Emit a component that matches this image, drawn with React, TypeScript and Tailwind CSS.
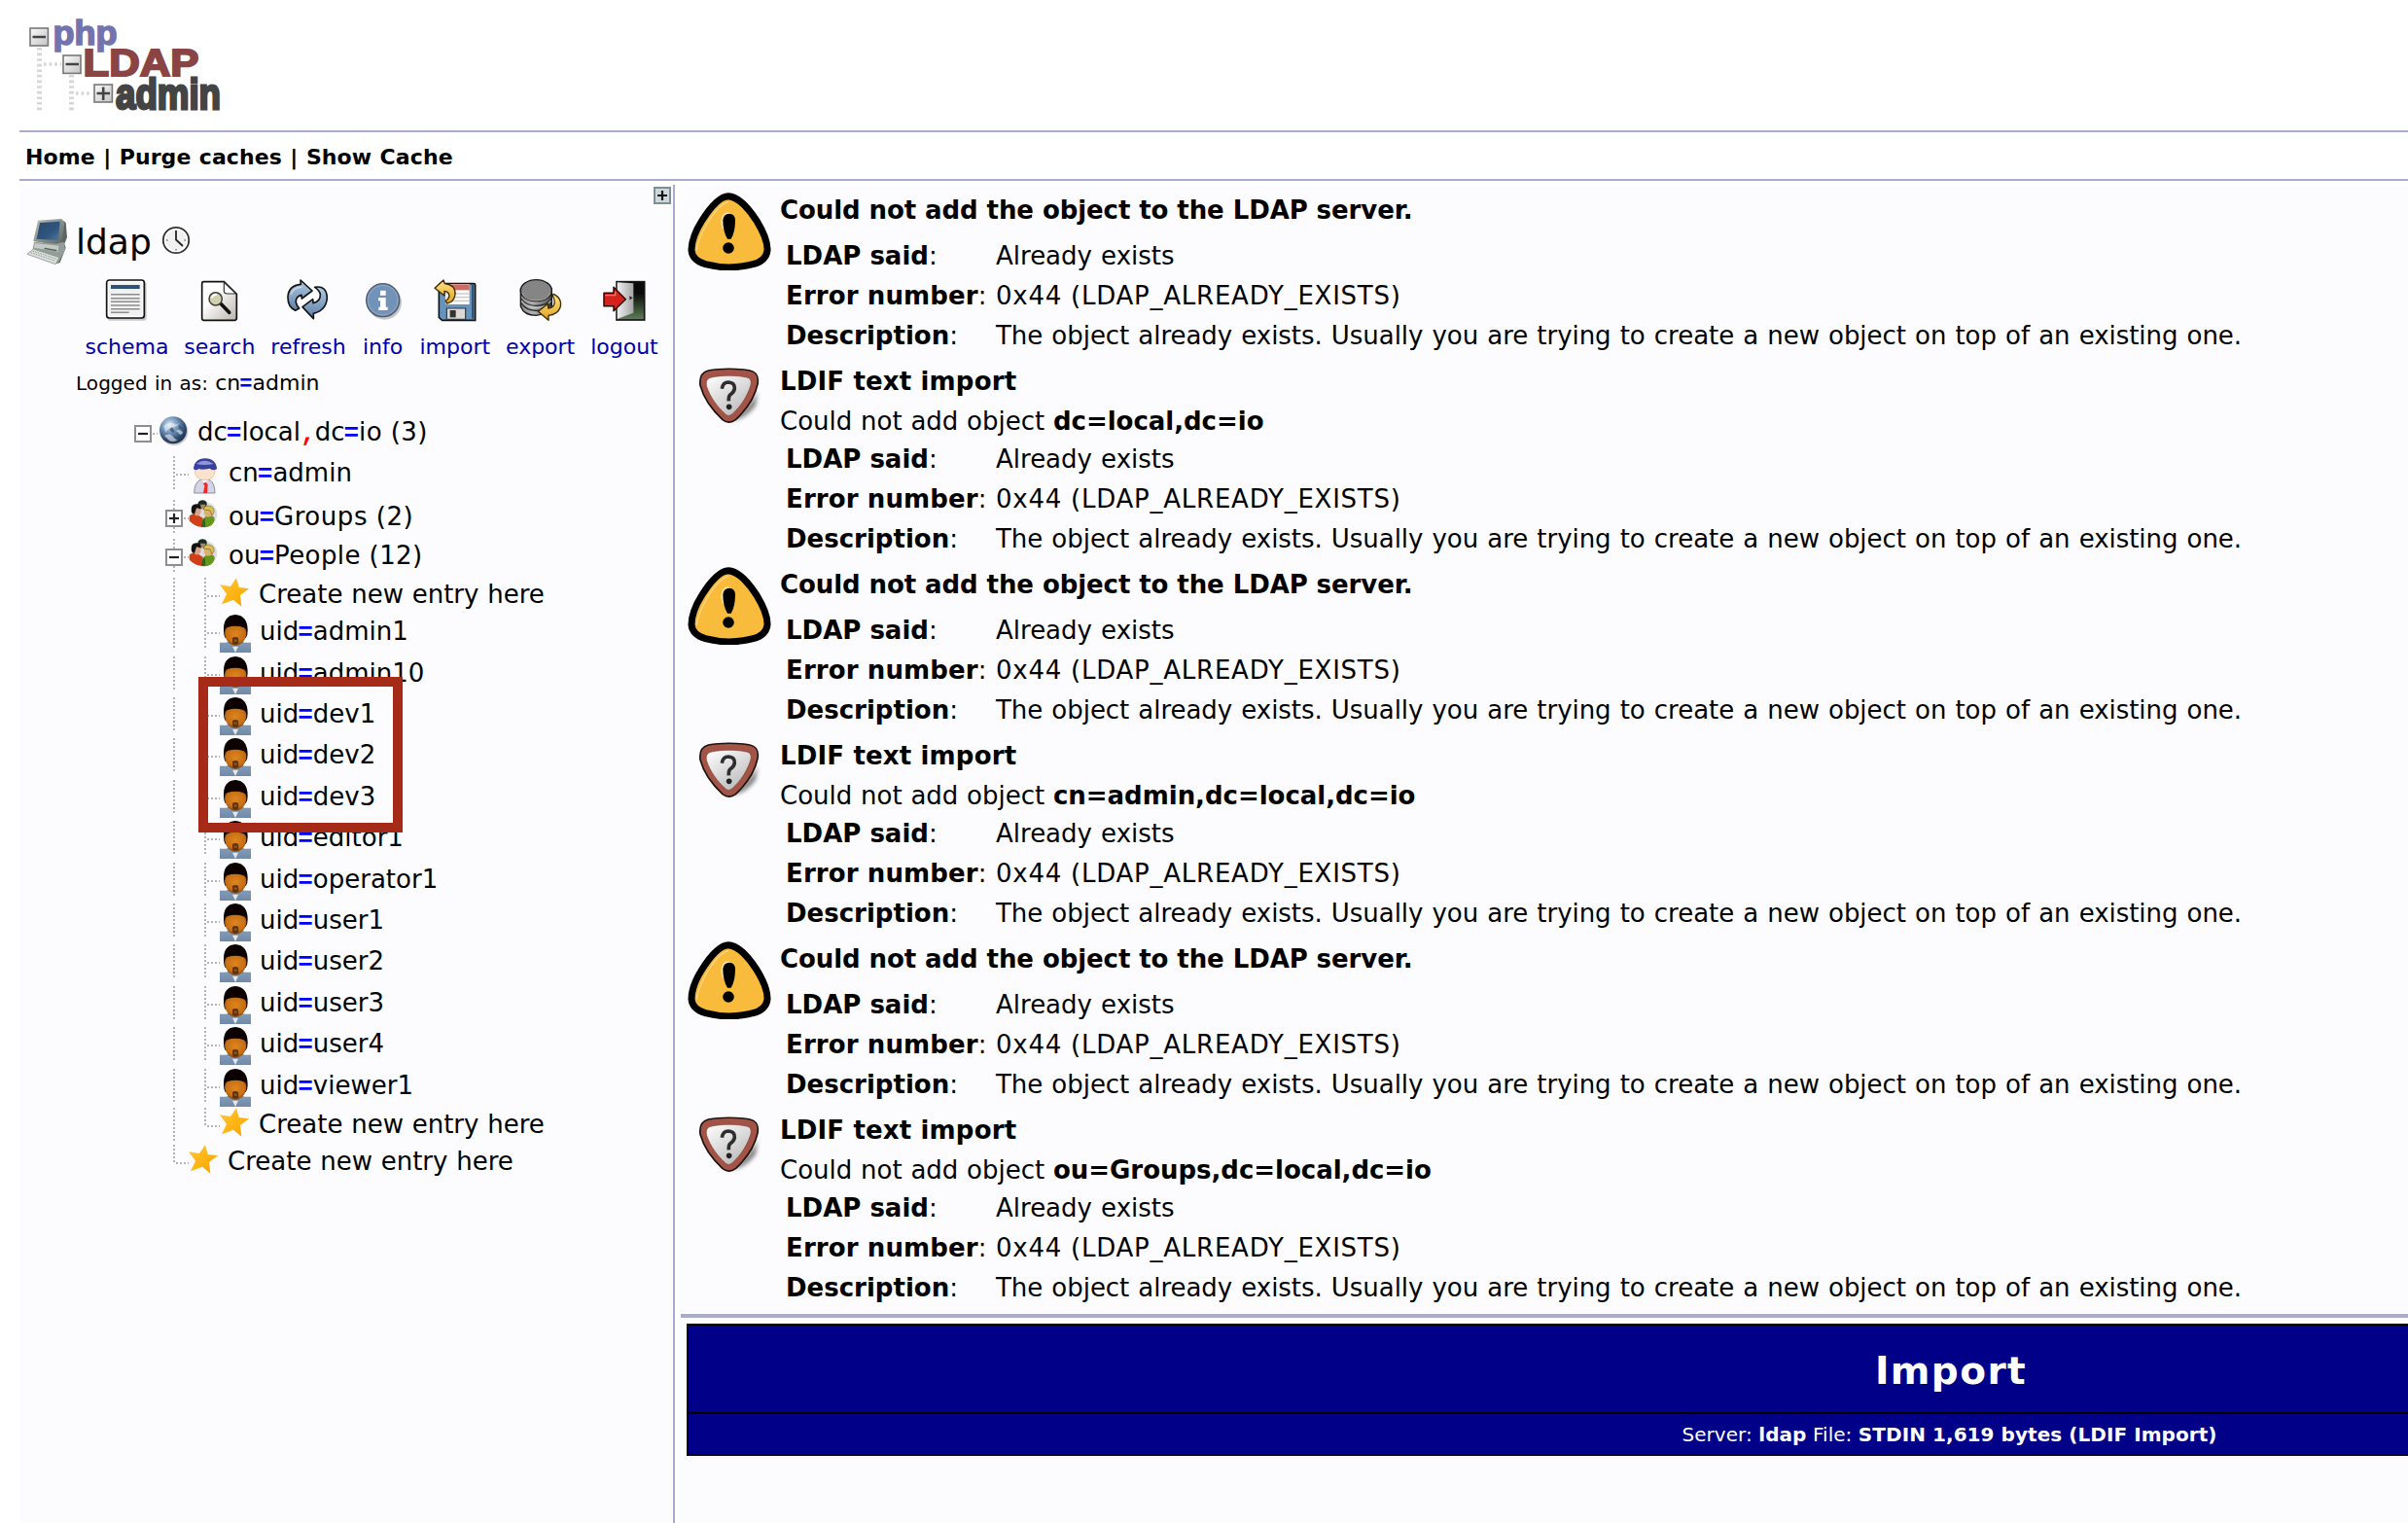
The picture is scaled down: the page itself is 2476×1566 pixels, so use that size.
import type { ReactNode } from "react";

/* ---------- Logo ---------- */

function Logo() {
  return (
    <svg className="block h-[118px] w-[214px]" viewBox="18 2 214 118" role="img" aria-label="phpLDAPadmin">
      <defs>
        <linearGradient id="logoBox" x1="0" y1="0" x2="1" y2="1">
          <stop offset="0" stopColor="#fafafa" />
          <stop offset="1" stopColor="#c4c4c4" />
        </linearGradient>
      </defs>
      <g stroke="#d6d6d6" strokeDasharray="2.6 3" fill="none">
        <path d="M40.5 49V115" strokeWidth="5" />
        <path d="M73.5 77V115" strokeWidth="5" />
        <path d="M45 66H63M78 96H95" strokeWidth="3.5" />
      </g>
      <g fill="url(#logoBox)" stroke="#777" strokeWidth="1.6">
        <rect x="31" y="29" width="18.4" height="18" />
        <rect x="65" y="57" width="18" height="18.4" />
        <rect x="97" y="87" width="18.4" height="18" />
      </g>
      <path d="M33.5 38H47M67.5 66H81M99.5 96H113M106.2 89.5V103" stroke="#444" strokeWidth="2.6" />
      <g fontFamily="Liberation Sans" fontWeight="700">
        <text x="54.5" y="46" fontSize="35" fill="#7274ae" stroke="#7274ae" strokeWidth="1.6" textLength="66" lengthAdjust="spacingAndGlyphs">php</text>
        <text x="85.5" y="77.5" fontSize="39.5" fill="#8a4444" stroke="#8a4444" strokeWidth="2" textLength="119" lengthAdjust="spacingAndGlyphs">LDAP</text>
        <text x="119" y="112" fontSize="44.5" fill="#444" stroke="#444" strokeWidth="2.8" textLength="108" lengthAdjust="spacingAndGlyphs">admin</text>
      </g>
    </svg>
  );
}

/* ---------- Server and toolbar icons ---------- */

function ComputerIcon() {
  return (
    <svg className="block h-[48px] w-[44px]" viewBox="0 0 132 144">
      <defs>
        <linearGradient id="scr" x1="0" y1="0" x2="1" y2="1">
          <stop offset="0" stopColor="#2b4a6c" />
          <stop offset="0.6" stopColor="#2f567f" />
          <stop offset="1" stopColor="#54789c" />
        </linearGradient>
        <linearGradient id="cas" x1="0" y1="0" x2="1" y2="1">
          <stop offset="0" stopColor="#b9c0ba" />
          <stop offset="1" stopColor="#59625d" />
        </linearGradient>
      </defs>
      <path d="M108 5 L122 14 L126 60 L118 80 L122 92 L104 138 L92 142 L92 70Z" fill="#5c6561" />
      <path d="M36 8 L108 3 L118 14 L110 78 L90 84 L22 72Z" fill="url(#cas)" />
      <path d="M42 15 L104 11 L99 70 L32 65Z" fill="url(#scr)" />
      <path d="M24 74 L92 80 L116 74 L120 98 L98 140 L78 132 L20 96Z" fill="#949d97" />
      <path d="M26 78 L100 86 L98 104 L24 92Z" fill="#c4cac5" />
      <path d="M56 94 L94 101" stroke="#4d5551" strokeWidth="4" />
      <path d="M22 96 L102 122 L90 143 L3 112Z" fill="#dde1de" stroke="#8b938e" strokeWidth="2.5" />
      <path d="M20 102 L94 127 M14 107 L90 133" stroke="#929a95" strokeWidth="3" strokeDasharray="5 3" />
    </svg>
  );
}

function ClockIcon() {
  return (
    <svg className="block h-[30px] w-[30px]" viewBox="0 0 30 30">
      <circle cx="15" cy="15" r="13.2" fill="#f0f0f0" stroke="#333" strokeWidth="1.8" />
      <circle cx="15" cy="15" r="11.3" fill="none" stroke="#fff" strokeWidth="1.5" />
      <path d="M15 5V14.5L22 21" fill="none" stroke="#222" strokeWidth="1.8" />
      <path d="M5 15h1.5M23.5 15h1.5M15 24v1.5" stroke="#777" strokeWidth="1.4" />
    </svg>
  );
}

function SchemaIcon() {
  return (
    <svg className="block h-[44px] w-[44px]" viewBox="0 0 132 132">
      <rect x="8" y="8" width="120" height="120" rx="8" fill="#000" opacity="0.2" />
      <rect x="5" y="3" width="116" height="117" rx="8" fill="#fff" stroke="#111" strokeWidth="5" />
      <rect x="12" y="10" width="102" height="103" fill="#f1f1f1" />
      <rect x="18" y="18" width="89" height="12" fill="#2f5078" />
      <path d="M18 47H107M18 59H107M18 70H107M18 81H107M18 92H107M18 103H74" stroke="#8c8c8c" strokeWidth="4.5" />
    </svg>
  );
}

function SearchPageIcon() {
  return (
    <svg className="block h-[44px] w-[42px]" viewBox="0 0 126 132">
      <defs>
        <linearGradient id="pg" x1="0" y1="0" x2="1" y2="1">
          <stop offset="0.35" stopColor="#fff" />
          <stop offset="1" stopColor="#b9b2aa" />
        </linearGradient>
      </defs>
      <path d="M14 8H76L115 46V120Q115 127 108 127H14Q8 127 8 120V14Q8 8 14 8Z" fill="url(#pg)" stroke="#111" strokeWidth="5" />
      <path d="M76 10V36Q76 45 86 45H113Z" fill="#fff" stroke="#333" strokeWidth="3.5" />
      <path d="M66 76 L92 103" stroke="#111" strokeWidth="11" strokeLinecap="round" />
      <circle cx="50" cy="61" r="20" fill="#d0cfae" stroke="#3d3d3d" strokeWidth="4.5" />
      <path d="M38 58Q42 47 54 47" fill="none" stroke="#fff" strokeWidth="6" />
    </svg>
  );
}

function RefreshIcon() {
  return (
    <svg className="block h-[44px] w-[44px]" viewBox="0 0 132 132">
      <defs>
        <linearGradient id="rf" x1="0" y1="0" x2="0" y2="1">
          <stop offset="0" stopColor="#b4cae0" />
          <stop offset="1" stopColor="#5b81aa" />
        </linearGradient>
      </defs>
      <g stroke="#151515" strokeWidth="5" strokeLinejoin="round" fill="url(#rf)">
        <path d="M42 3 L78 36 L46 60 L45 49 Q26 54 28 72 Q30 82 38 90 L26 97 Q2 86 3 54 Q5 20 43 16Z" />
        <path d="M82 122 L48 86 L80 62 L81 74 Q104 68 103 47 Q101 35 86 25 Q122 18 124 57 Q122 96 82 106Z" />
      </g>
      <path d="M12 48Q18 26 46 24" fill="none" stroke="#dce8f3" strokeWidth="4" opacity="0.7" />
    </svg>
  );
}

function InfoIcon() {
  return (
    <svg className="block h-[44px] w-[44px]" viewBox="0 0 132 132">
      <circle cx="70" cy="72" r="53" fill="#000" opacity="0.22" />
      <circle cx="65" cy="65" r="51" fill="#7392b8" stroke="#4e5a68" strokeWidth="4" />
      <circle cx="65" cy="65" r="46" fill="none" stroke="#8fa9c9" strokeWidth="3" />
      <path d="M57 35H74V50H57ZM51 57H74V86H80V96H52V86H57V67H51Z" fill="#fff" />
    </svg>
  );
}

function ImportIcon() {
  return (
    <svg className="block h-[44px] w-[44px]" viewBox="0 0 132 132">
      <defs>
        <linearGradient id="gold" x1="0" y1="0" x2="0" y2="1">
          <stop offset="0" stopColor="#ffe58a" />
          <stop offset="1" stopColor="#e0a21c" />
        </linearGradient>
      </defs>
      <path d="M20 14H124Q128 14 128 18V127H26L16 118V18Z" fill="#6593bd" stroke="#151515" strokeWidth="5" />
      <path d="M117 18V122H124V18Z" fill="#33536f" />
      <path d="M36 15H110V78H36Z" fill="#fafafa" />
      <path d="M36 16H110V34H36Z" fill="#cf6a62" />
      <path d="M38 45H110M38 56H110M38 67H110" stroke="#bcbcbc" strokeWidth="3" />
      <path d="M40 90H98V124H40Z" fill="#ddd8d2" stroke="#2d3a46" strokeWidth="3.5" />
      <path d="M50 96H68V118H50Z" fill="#333" />
      <path d="M3 28 L30 3 L34 14 Q68 18 66 48 Q62 72 40 75 L37 66 Q52 58 46 44 Q42 38 33 37 L33 51Z" fill="url(#gold)" stroke="#3a2a05" strokeWidth="4" strokeLinejoin="round" />
    </svg>
  );
}

function ExportIcon() {
  return (
    <svg className="block h-[44px] w-[44px]" viewBox="0 0 132 132">
      <defs>
        <linearGradient id="cyl" x1="0" y1="0" x2="1" y2="0">
          <stop offset="0" stopColor="#8b8b8b" />
          <stop offset="0.4" stopColor="#b2b2b2" />
          <stop offset="1" stopColor="#4a4a4a" />
        </linearGradient>
      </defs>
      <path d="M4 30V84Q14 112 52 112Q90 108 100 84V30Z" fill="url(#cyl)" stroke="#1a1a1a" strokeWidth="4" />
      <path d="M5 60Q20 82 52 82Q86 82 99 60M5 74Q20 97 52 97Q86 97 99 74" fill="none" stroke="#222" strokeWidth="3.5" />
      <path d="M7 66Q22 88 52 88Q84 88 97 66" fill="none" stroke="#d0d0d0" strokeWidth="3" />
      <ellipse cx="52" cy="35" rx="48" ry="33" fill="#858585" stroke="#1a1a1a" strokeWidth="4" />
      <path d="M8 42Q16 66 52 66Q88 66 96 42" fill="none" stroke="#bbb" strokeWidth="2.5" />
      <path d="M106 46 Q134 60 126 88 Q118 110 90 112 L90 127 L58 100 L88 76 L89 90 Q104 90 108 76 Q110 60 102 50Z" fill="url(#gold)" stroke="#3a2a05" strokeWidth="4" strokeLinejoin="round" />
    </svg>
  );
}

function LogoutIcon() {
  return (
    <svg className="block h-[44px] w-[44px]" viewBox="0 0 132 132">
      <defs>
        <linearGradient id="night" x1="0" y1="0" x2="0" y2="1">
          <stop offset="0.3" stopColor="#0a0a0a" />
          <stop offset="1" stopColor="#5f8057" />
        </linearGradient>
        <linearGradient id="door" x1="0" y1="0" x2="1" y2="0">
          <stop offset="0" stopColor="#efefef" />
          <stop offset="1" stopColor="#a5a5a5" />
        </linearGradient>
      </defs>
      <rect x="42" y="8" width="86" height="118" fill="url(#night)" stroke="#151515" strokeWidth="5" />
      <path d="M44 10 L94 13 V104 L44 123Z" fill="url(#door)" />
      <path d="M82 54L88 58L82 62" stroke="#222" strokeWidth="4" fill="none" />
      <path d="M3 43H33V25L70 62L33 98V83H3Z" fill="#d4231c" stroke="#2a0705" strokeWidth="4.5" strokeLinejoin="round" />
      <path d="M7 50H38V38" stroke="#f07a70" strokeWidth="4" fill="none" />
    </svg>
  );
}

/* ---------- Tree icons ---------- */

function GlobeIcon() {
  return (
    <svg className="ml-[1px] mt-px block h-[32px] w-[32px]" viewBox="0 0 96 96">
      <defs>
        <radialGradient id="earth" cx="0.38" cy="0.3" r="0.75">
          <stop offset="0" stopColor="#d8e5f0" />
          <stop offset="0.35" stopColor="#7d9fc0" />
          <stop offset="0.75" stopColor="#2d4a70" />
          <stop offset="1" stopColor="#1b2c45" />
        </radialGradient>
      </defs>
      <circle cx="48" cy="47" r="43" fill="#000" opacity="0.2" />
      <circle cx="45" cy="43" r="42" fill="url(#earth)" />
      <path d="M16 30Q30 14 44 22T66 18Q58 32 44 34T22 50ZM18 60Q34 50 44 62T60 72Q48 82 34 76ZM54 44Q66 38 76 50L68 58Z" fill="#eef4f8" opacity="0.6" />
      <path d="M40 34Q52 40 48 52Q38 50 34 42ZM62 26Q72 32 74 40L64 38Z" fill="#2d4a70" opacity="0.7" />
    </svg>
  );
}

function AdminIcon() {
  return (
    <svg className="ml-[3px] mt-[2px] block h-[38px] w-[27px]" viewBox="0 0 81 114">
      <path d="M8 108Q8 76 28 66H54Q72 76 72 108Z" fill="#d3d5e4" stroke="#8a8ca0" strokeWidth="3" />
      <path d="M30 64L40 80L52 64Z" fill="#fff" />
      <path d="M36 78L44 74L50 82L48 108H36L40 86Z" fill="#ee2a2a" />
      <ellipse cx="41" cy="42" rx="31" ry="26" fill="#fbe2cc" stroke="#e3b48e" strokeWidth="2" />
      <path d="M6 34Q8 2 42 1Q76 2 78 34Q66 40 56 32Q30 38 22 33Q14 40 6 34Z" fill="#39419c" />
      <path d="M14 18Q40 -2 68 18Q40 24 14 18Z" fill="#9097d6" />
    </svg>
  );
}

function GroupIcon() {
  return (
    <svg className="block h-[29px] w-[30px]" viewBox="0 0 90 86">
      <ellipse cx="50" cy="44" rx="38" ry="38" fill="#000" opacity="0.12" />
      <path d="M28 12Q30 0 44 0Q58 2 56 14L52 24H34Z" fill="#1b2a22" />
      <path d="M36 14H52L48 28H38Z" fill="#a88a5c" />
      <path d="M2 50Q6 42 22 42L44 56V83Q20 84 2 64Z" fill="#cf4018" />
      <path d="M44 58Q58 42 78 52Q84 64 70 78Q58 86 44 84Z" fill="#64961c" />
      <path d="M44 60L38 84L52 82L50 58Z" fill="#2f6415" />
      <ellipse cx="26" cy="34" rx="12" ry="15" fill="#d8a488" />
      <path d="M8 34Q6 12 24 12Q40 14 38 28L24 24L18 44Q10 44 8 34Z" fill="#111" />
      <ellipse cx="60" cy="38" rx="13" ry="15" fill="#dcb070" />
      <path d="M46 30Q48 16 62 18Q80 20 78 38L72 48L66 32Z" fill="#dcc052" stroke="#54480f" strokeWidth="1.5" />
    </svg>
  );
}

function UserIcon() {
  return (
    <svg className="block h-[39px] w-[32px]" viewBox="0 0 96 117">
      <defs>
        <linearGradient id="shirt" x1="0" y1="0" x2="0" y2="1">
          <stop offset="0" stopColor="#647486" />
          <stop offset="0.25" stopColor="#7f99b6" />
          <stop offset="1" stopColor="#7089a8" />
        </linearGradient>
        <radialGradient id="face" cx="0.5" cy="0.4" r="0.62">
          <stop offset="0" stopColor="#de851f" />
          <stop offset="0.7" stopColor="#c66e14" />
          <stop offset="1" stopColor="#6e3906" />
        </radialGradient>
        <filter id="soft" x="-10%" y="-10%" width="120%" height="120%">
          <feGaussianBlur stdDeviation="1.8" />
        </filter>
      </defs>
      <path d="M0 86H20L34 80H62L76 86H96V117H0Z" fill="url(#shirt)" />
      <path d="M39 98L48 117L57 98Z" fill="#e4e8ec" />
      <g filter="url(#soft)">
        <path d="M12 50Q10 2 48 0Q86 2 86 50Q86 64 80 72H17Q12 62 12 50Z" fill="#070503" />
        <path d="M15 58Q15 42 24 39Q48 31 72 39Q83 42 82 58Q81 76 68 88Q48 103 29 88Q17 76 15 58Z" fill="url(#face)" />
        <path d="M39 72Q48 66 57 72L58 88Q48 97 39 88Z" fill="#5e330a" />
        <path d="M44 80H53" stroke="#95541a" strokeWidth="7" />
      </g>
    </svg>
  );
}

function StarIcon() {
  return (
    <svg className="block h-[30px] w-[30px]" viewBox="0 0 90 90">
      <defs>
        <linearGradient id="star" x1="0" y1="0" x2="1" y2="1">
          <stop offset="0" stopColor="#ffc640" />
          <stop offset="0.5" stopColor="#ffb515" />
          <stop offset="1" stopColor="#f5a100" />
        </linearGradient>
      </defs>
      <path d="M51 1L59 30L90 34L63 54L67 89L42 68L6 82L21 50L0 22L33 27Z" fill="url(#star)" />
    </svg>
  );
}

type GuideKind = "none" | "root" | "pass" | "leaf" | "last" | "plus" | "minus";

/* One 32px column of the dotted tree lines, with the expander box where the row has one. */
function Guide({ kind }: { kind: GuideKind }) {
  const box = kind === "root" || kind === "plus" || kind === "minus";
  return (
    <svg className="block h-[36px] w-[32px] shrink-0" viewBox="0 0 32 36">
      <g stroke="#b3b3b3" strokeWidth="2" strokeDasharray="2 2" fill="none">
        {(kind === "pass" || kind === "leaf" || kind === "plus" || kind === "minus") && <path d="M17 0V35" />}
        {kind === "last" && <path d="M17 0V19" />}
        {(kind === "leaf" || kind === "last") && <path d="M19 19H32" />}
        {box && <path d="M27 19H32" />}
      </g>
      {box && (
        <>
          <rect x="9" y="11" width="16" height="16" fill="#fff" stroke="#8e8e8e" strokeWidth="2" />
          <path d="M12 19H22" stroke="#222" strokeWidth="2.2" />
          {kind === "plus" && <path d="M17 14V24" stroke="#222" strokeWidth="2.2" />}
        </>
      )}
    </svg>
  );
}

/* ---------- Message icons ---------- */

function WarningIcon() {
  return (
    <svg className="ml-[9px] mt-[3px] block h-[80px] w-[87px]" viewBox="0 0 261 240">
      <path
        d="M126 11C158 13 192 54 213 87C232 118 247 150 246 178C243 206 221 216 202 221C152 234 104 234 55 221C34 215 14 204 12 178C12 148 27 114 44 87C66 52 97 12 126 11Z"
        fill="#f9bb3c"
        stroke="#000"
        strokeWidth="21"
        strokeLinejoin="round"
      />
      <path d="M126 29C102 34 74 70 60 96C44 124 31 150 28 178" fill="none" stroke="#fbd586" strokeWidth="4" />
      <ellipse cx="123" cy="91" rx="20" ry="30" fill="#fde3a8" />
      <path d="M129 65Q146 66 147 84Q147 122 134 143H123Q109 120 109 84Q111 66 129 65Z" fill="#000" />
      <circle cx="126" cy="171" r="17.5" fill="#000" />
    </svg>
  );
}

function ShieldIcon() {
  return (
    <svg className="ml-[19px] mt-[6px] block h-[60px] w-[66px]" viewBox="0 0 198 180">
      <defs>
        <linearGradient id="shield" x1="0" y1="0" x2="0.7" y2="1">
          <stop offset="0" stopColor="#fff" />
          <stop offset="1" stopColor="#bcbcbc" />
        </linearGradient>
        <filter id="shade" x="-20%" y="-20%" width="140%" height="140%">
          <feGaussianBlur stdDeviation="6" />
        </filter>
      </defs>
      <path d="M110 160Q160 130 186 76L180 120Q150 160 110 166Z" fill="#000" opacity="0.5" filter="url(#shade)" />
      <path d="M34 12C70 5 124 5 162 12C184 17 190 30 186 54C178 92 152 132 118 164C104 174 92 174 78 164C44 132 18 92 9 58C6 34 12 18 34 12Z" fill="#a35446" stroke="#1c1412" strokeWidth="5" />
      <path d="M44 33C76 26 120 26 152 33C166 36 168 46 164 60C153 94 134 122 108 146C99 153 94 153 86 146C60 122 40 94 29 62C25 46 29 36 44 33Z" fill="url(#shield)" stroke="#7e3a30" strokeWidth="2" />
      <path d="M76 68Q79 48 96 48Q116 49 115 68Q113 80 101 87Q96 92 97 106" fill="none" stroke="#2e2e2e" strokeWidth="11" />
      <circle cx="98" cy="124" r="8.5" fill="#222" />
    </svg>
  );
}

/* ---------- Sidebar ---------- */

const Eq = () => <span className="-ml-px font-['Liberation_Mono'] font-bold text-[#00f]">=</span>;
const Comma = () => <span className="-mr-px font-['Liberation_Mono'] font-bold text-[#f00]">,</span>;

const tools: { label: string; icon: ReactNode }[] = [
  { label: "schema", icon: <SchemaIcon /> },
  { label: "search", icon: <SearchPageIcon /> },
  { label: "refresh", icon: <RefreshIcon /> },
  { label: "info", icon: <InfoIcon /> },
  { label: "import", icon: <ImportIcon /> },
  { label: "export", icon: <ExportIcon /> },
  { label: "logout", icon: <LogoutIcon /> },
];

function TreeRow({ h, guides, icon, children }: { h: string; guides: GuideKind[]; icon: ReactNode; children: ReactNode }) {
  return (
    <li className={`flex items-start ${h}`}>
      {guides.map((g, i) => (
        <Guide key={i} kind={g} />
      ))}
      <div className="w-10 shrink-0">{icon}</div>
      <div className="whitespace-pre text-[26px] leading-[35px]">{children}</div>
    </li>
  );
}

const users: { name: string; h: string }[] = [
  { name: "admin1", h: "h-[43px]" },
  { name: "admin10", h: "h-[42px]" },
  { name: "dev1", h: "h-[42px]" },
  { name: "dev2", h: "h-[43px]" },
  { name: "dev3", h: "h-[42px]" },
  { name: "editor1", h: "h-[43px]" },
  { name: "operator1", h: "h-[42px]" },
  { name: "user1", h: "h-[42px]" },
  { name: "user2", h: "h-[43px]" },
  { name: "user3", h: "h-[42px]" },
  { name: "user4", h: "h-[43px]" },
  { name: "viewer1", h: "h-[40px]" },
];

const CreateEntry = () => <span className="[word-spacing:0.5px]">Create new entry here</span>;

function Sidebar() {
  return (
    <aside className="relative flex w-[674px] shrink-0 flex-col border-r-2 border-[#aaaacc] bg-[#fcfcfe]">
      <div className="mr-[2px] mt-[2px] flex h-[18px] justify-end">
        <svg className="block h-[18px] w-[18px]" viewBox="0 0 18 18">
          <rect x="1" y="1" width="16" height="16" fill="#ccd8dc" stroke="#7d8f91" strokeWidth="2" />
          <path d="M4 9H14M9 4V14" stroke="#111" strokeWidth="2.2" />
        </svg>
      </div>

      <div className="mt-[14px] flex h-[48px] items-start pl-[7px]">
        <ComputerIcon />
        <span className="ml-[7px] mt-px text-[36px] leading-[48px]">ldap</span>
        <span className="ml-[10px] mt-[8px]">
          <ClockIcon />
        </span>
      </div>

      <div className="mt-[15px] flex gap-[15.9px] pl-[67.5px]">
        {tools.map((t) => (
          <a key={t.label} className="flex flex-col items-center text-[22px] leading-[26px] text-[#0000aa]">
            <span className="mb-[13px]">{t.icon}</span>
            {t.label}
          </a>
        ))}
      </div>

      <div className="mt-[11px] whitespace-pre pl-[58px] text-[22px] leading-[26px]">
        <span className="text-[20px] tracking-[0.05px] [word-spacing:0.8px]">Logged in as: </span>
        cn
        <Eq />
        admin
      </div>

      <ul className="mt-[18px] pl-[110px]">
        <TreeRow h="h-[42px]" guides={["root"]} icon={<GlobeIcon />}>
          <span className="pl-px">dc</span>
          <Eq />
          local
          <Comma />
          dc
          <Eq />
          <span className="tracking-[0.4px]">io (3)</span>
        </TreeRow>
        <TreeRow h="h-[45px]" guides={["none", "leaf"]} icon={<AdminIcon />}>
          <span className="pl-px">cn</span>
          <Eq />
          admin
        </TreeRow>
        <TreeRow h="h-[40px]" guides={["none", "plus"]} icon={<GroupIcon />}>
          <span className="pl-px">ou</span>
          <Eq />
          <span className="tracking-[0.55px]">Groups (2)</span>
        </TreeRow>
        <TreeRow h="h-[40px]" guides={["none", "minus"]} icon={<GroupIcon />}>
          <span className="pl-px">ou</span>
          <Eq />
          <span className="tracking-[0.42px]">People (12)</span>
        </TreeRow>
        <TreeRow h="h-[38px]" guides={["none", "pass", "leaf"]} icon={<StarIcon />}>
          <CreateEntry />
        </TreeRow>
        {users.map((u) => (
          <TreeRow key={u.name} h={u.h} guides={["none", "pass", "leaf"]} icon={<UserIcon />}>
            <span className="pl-px">uid</span>
            <Eq />
            {u.name}
          </TreeRow>
        ))}
        <TreeRow h="h-[38px]" guides={["none", "pass", "last"]} icon={<StarIcon />}>
          <CreateEntry />
        </TreeRow>
        <TreeRow h="h-[36px]" guides={["none", "last"]} icon={<StarIcon />}>
          <CreateEntry />
        </TreeRow>
      </ul>

      {/* Highlight frame over the dev accounts */}
      <div className="absolute left-[184px] top-[506px] h-[160px] w-[210px] border-[10px] border-[#a52a17]" />
    </aside>
  );
}

/* ---------- Messages ---------- */

function ErrorDetails() {
  return (
    <dl className="grid grid-cols-[216px_1fr] pl-[6px] leading-[41px]">
      <dt>
        <b>LDAP said</b>:
      </dt>
      <dd className="[word-spacing:0.9px]">Already exists</dd>
      <dt>
        <b className="tracking-[0.12px]">Error number</b>:
      </dt>
      <dd className="tracking-[0.76px]">0x44 (LDAP_ALREADY_EXISTS)</dd>
      <dt>
        <b>Description</b>:
      </dt>
      <dd className="tracking-[-0.04px] [word-spacing:0.9px]">
        The object already exists. Usually you are trying to create a new object on top of an existing one.
      </dd>
    </dl>
  );
}

function Message({ dn }: { dn: string }) {
  return (
    <>
      <section className="flex h-[176px] whitespace-nowrap">
        <div className="w-[104px] shrink-0">
          <WarningIcon />
        </div>
        <div className="pt-px">
          <h3 className="mb-[6px] font-bold leading-[41px] tracking-[-0.08px]">Could not add the object to the LDAP server.</h3>
          <ErrorDetails />
        </div>
      </section>
      <section className="flex h-[209px] whitespace-nowrap">
        <div className="w-[104px] shrink-0">
          <ShieldIcon />
        </div>
        <div>
          <h3 className="font-bold leading-[42px] tracking-[0.16px]">LDIF text import</h3>
          <p className="pt-px leading-[38px] [word-spacing:0.5px]">
            Could not add object <b className="tracking-[-0.03px]">{dn}</b>
          </p>
          <ErrorDetails />
        </div>
      </section>
    </>
  );
}

export default function App() {
  return (
    <div className="flex h-[1566px] w-[2476px] flex-col overflow-hidden bg-white pl-5 font-['Verdana','DejaVu_Sans',sans-serif] text-black">
      <header className="h-[134px] -ml-[2px] pt-[2px]">
        <Logo />
      </header>
      <nav className="h-[52px] whitespace-pre border-y-2 border-[#aaaacc] pl-[6px] text-[22px] font-bold leading-[52px] tracking-[0.08px] [word-spacing:0.7px]">
        Home | Purge caches | Show Cache
      </nav>

      <div className="mt-1 flex min-h-0 flex-1 gap-1">
        <Sidebar />
        <main className="flex min-w-0 flex-1 flex-col overflow-hidden bg-[#fcfcfe] text-[26px]">
          <div className="mt-[5px]">
            <Message dn="dc=local,dc=io" />
            <Message dn="cn=admin,dc=local,dc=io" />
            <Message dn="ou=Groups,dc=local,dc=io" />
          </div>
          <div className="ml-[2px] mt-px h-1 shrink-0 bg-[#aaaacc]" />
          <div className="h-[6px] shrink-0" />
          <div className="ml-2 w-[2600px] shrink-0 border-2 border-black bg-[#000088] text-center text-white">
            <h1 className="h-[89px] text-[39px] font-bold leading-[94px] tracking-[1.4px]">Import</h1>
            <div className="h-[43px] border-t-2 border-black pr-[3px] text-[20px] leading-[43px] tracking-[0.06px]">
              Server: <b>ldap</b> File: <b>STDIN 1,619 bytes (LDIF Import)</b>
            </div>
          </div>
        </main>
      </div>
    </div>
  );
}
